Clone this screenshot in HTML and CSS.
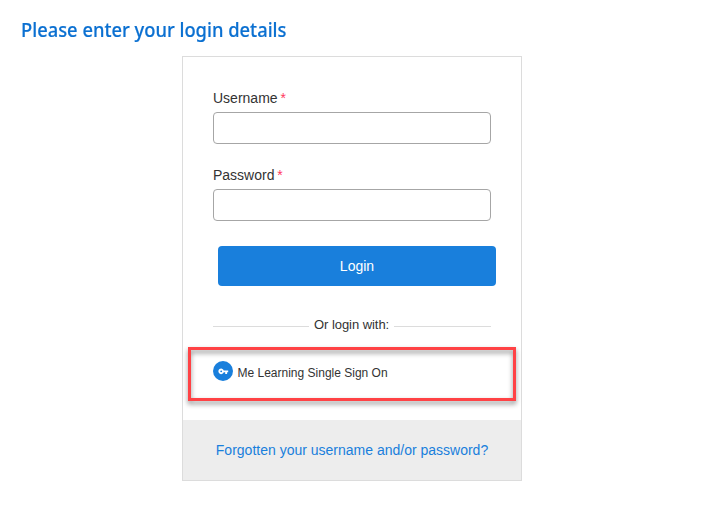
FILE: index.html
```html
<!DOCTYPE html>
<html lang="en">
<head>
    <meta charset="UTF-8">
    <meta name="viewport" content="width=device-width, initial-scale=1.0">
    <title>Login</title>
    <link rel="stylesheet" href="styles.css">
</head>
<body>
    <h1><span>Please enter your login details</span></h1>

    <div class="login-box">
        <form class="login-form">
            <label for="username">Username <span class="required">*</span></label>
            <input type="text" id="username">

            <label for="password">Password <span class="required">*</span></label>
            <input type="password" id="password">

            <button type="button" class="login-btn">Login</button>

            <div class="divider"><span>Or login with:</span></div>

            <div class="sso">
                <svg class="sso-icon" width="20" height="20" viewBox="0 0 20 20">
                    <circle cx="10" cy="10" r="10" fill="#197fdc"/>
                    <path d="M10.8 9.4a2.8 2.8 0 1 0 0 1.9h1.4v1.6h1.9v-1.6h1.1V9.4zM8.2 11.3a.95.95 0 1 1 0-1.9.95.95 0 0 1 0 1.9z" fill="#fff" fill-rule="evenodd"/>
                </svg>
                <span>Me Learning Single Sign On</span>
                <div class="callout"></div>
            </div>
        </form>

        <div class="login-footer">
            <a href="#">Forgotten your username and/or password?</a>
        </div>
    </div>
</body>
</html>
```

FILE: styles.css
```css
* {
    box-sizing: border-box;
}
body {
    margin: 0;
    background: #fff;
    color: #333;
    font-family: Arial, "Liberation Sans", sans-serif;
    font-size: 14px;
}
h1 {
    margin: 0;
    padding: 14px 0 0 21px;
    height: 56px;
    font-family: "Noto Sans", "Open Sans", sans-serif;
    font-size: 20.5px;
    font-weight: 500;
    line-height: 30px;
    color: #0b70d1;
}
h1 span {
    display: inline-block;
    transform: scaleX(0.895);
    transform-origin: left;
    white-space: nowrap;
    -webkit-text-stroke: 0.2px #0b70d1;
}
.login-box {
    width: 340px;
    height: 425px;
    margin-left: 182px;
    border: 1px solid #dcdcdc;
    display: flex;
    flex-direction: column;
}
.login-form {
    flex: 1;
    display: flex;
    flex-direction: column;
    padding: 31px 30px 0;
}
label {
    height: 24px;
    line-height: 20px;
}
.required {
    margin-left: -1px;
    color: #ff3860;
}
input {
    width: 278px;
    height: 32px;
    margin: 0 0 21px;
    border: 1px solid #a6a6a6;
    border-radius: 4px;
}
.login-btn {
    width: 278px;
    height: 40px;
    margin: 4px 0 0 5px;
    padding: 0;
    border: none;
    border-radius: 4px;
    background: #197fdc;
    color: #fff;
    font-family: inherit;
    font-size: 14px;
}
.divider {
    display: flex;
    align-items: center;
    gap: 5px;
    height: 20px;
    margin-top: 28px;
    font-size: 13px;
    letter-spacing: -0.05px;
    white-space: nowrap;
}
.divider::before,
.divider::after {
    content: "";
    flex: 1;
    height: 1px;
    margin-top: 5px;
    background: #dcdcdc;
}
.divider::before {
    flex: none;
    width: 96px;
}
.sso {
    position: relative;
    display: flex;
    align-items: center;
    gap: 4.5px;
    height: 20px;
    margin-top: 27px;
    font-size: 12px;
}
.sso span {
    padding-top: 3px;
}
.callout {
    position: absolute;
    left: -25px;
    top: -14px;
    width: 328px;
    height: 54px;
    border: 3px solid #ff4245;
    filter: drop-shadow(0 3px 2.5px rgba(0, 0, 0, 0.45));
}
.login-footer {
    height: 60px;
    background: #ededed;
    line-height: 60px;
    text-align: center;
}
.login-footer a {
    color: #197fdc;
    text-decoration: none;
}
```
